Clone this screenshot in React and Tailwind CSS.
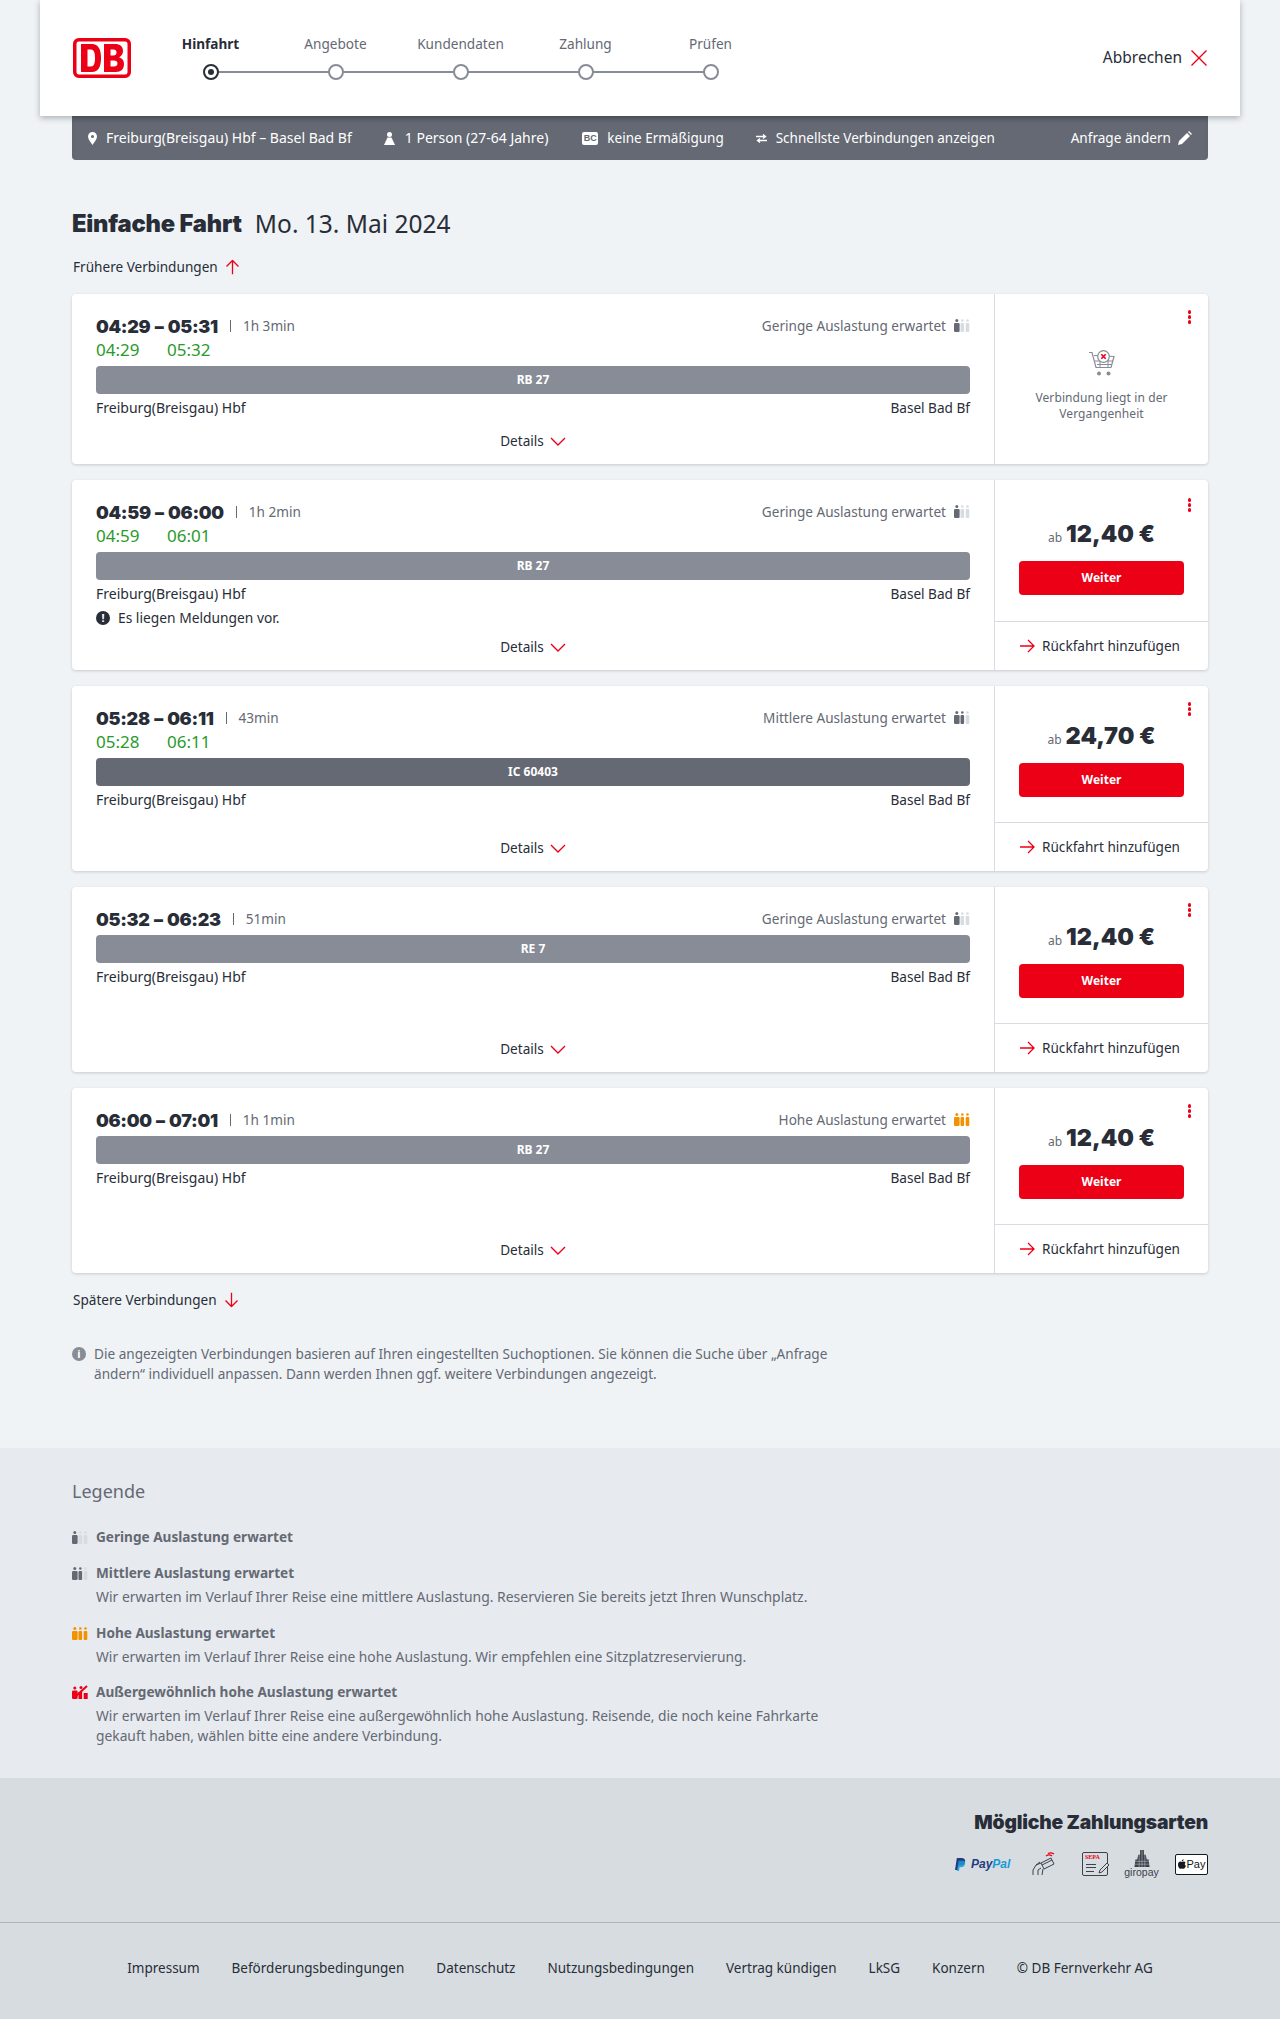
const STEPS = ['Hinfahrt', 'Angebote', 'Kundendaten', 'Zahlung', 'Prüfen'];

const CONNECTIONS = [
  { time: '04:29 – 05:31', dur: '1h 3min', load: 'Geringe Auslastung erwartet', level: 1, live: ['04:29', '05:32'], train: 'RB 27', height: 'h-[170px]', past: true },
  { time: '04:59 – 06:00', dur: '1h 2min', load: 'Geringe Auslastung erwartet', level: 1, live: ['04:59', '06:01'], train: 'RB 27', height: 'h-[190px]', price: '12,40 €', note: true },
  { time: '05:28 – 06:11', dur: '43min', load: 'Mittlere Auslastung erwartet', level: 2, live: ['05:28', '06:11'], train: 'IC 60403', height: 'h-[185px]', price: '24,70 €', dark: true },
  { time: '05:32 – 06:23', dur: '51min', load: 'Geringe Auslastung erwartet', level: 1, train: 'RE 7', height: 'h-[185px]', price: '12,40 €' },
  { time: '06:00 – 07:01', dur: '1h 1min', load: 'Hohe Auslastung erwartet', level: 3, train: 'RB 27', height: 'h-[185px]', price: '12,40 €' },
];

const FOOTER_LINKS = ['Impressum', 'Beförderungsbedingungen', 'Datenschutz', 'Nutzungsbedingungen', 'Vertrag kündigen', 'LkSG', 'Konzern', '© DB Fernverkehr AG'];

const DbLogo = () => (
  <svg viewBox="0 0 58 40" className="w-[58px] h-10 shrink-0">
    <rect x="1.750" y="1.750" width="54.500" height="36.500" rx="4" fill="#fff" stroke="#ec0016" strokeWidth="3.500" />
    <path fillRule="evenodd" fill="#ec0016" d="M8 6h11c6 0 9 5 9 14s-3 14-9 14H8zM14.500 11.500v17h3.500c3 0 4-3.500 4-8.500s-1-8.500-4-8.500zM31 6h11c5 0 8 2.500 8 7 0 3-1.500 5-4 6.300 3 .8 5 3.200 5 6.700 0 5-3 8-8 8H31zM37.500 11.500v6h3c2 0 3-1 3-3s-1-3-3-3zM37.500 22.500v6h3.500c2 0 3.500-1 3.500-3s-1.500-3-3.500-3z" />
  </svg>
);

const RedArrow = ({ className = '' }) => (
  <svg viewBox="0 0 15 14" className={`w-[15px] h-[14px] shrink-0 ${className}`} fill="none" stroke="#ec0016" strokeWidth="1.300">
    <path d="M0 7h14M8 1l6 6-6 6" />
  </svg>
);

const RedChevron = () => (
  <svg viewBox="0 0 16 9" className="w-4 h-[9px] shrink-0" fill="none" stroke="#ec0016" strokeWidth="1.400">
    <path d="M1 1l7 7 7-7" />
  </svg>
);

// three little people, the first "level" of them filled
const Occupancy = ({ level, color = '#646973' }) => {
  const fill = (i) => (i < level ? color : '#d7dce1');
  return (
    <svg viewBox="0 0 16 13" className="w-4 h-[13px] shrink-0">
      <circle cx="2.800" cy="1.500" r="1.500" fill={fill(0)} />
      <rect x="0" y="4" width="5.600" height="9" rx="1.200" fill={fill(0)} />
      <circle cx="8.300" cy="1.500" r="1.300" fill={fill(1)} />
      <rect x="6.500" y="4" width="3.600" height="9" rx="1" fill={fill(1)} />
      <circle cx="13.500" cy="1.500" r="1.300" fill={fill(2)} />
      <rect x="11.700" y="4" width="3.600" height="9" rx="1" fill={fill(2)} />
    </svg>
  );
};

const OccupancyFull = () => (
  <svg viewBox="0 0 16 14" className="w-4 h-[14px] shrink-0">
    <circle cx="2.800" cy="3" r="1.500" fill="#ec0016" />
    <rect x="0" y="5.500" width="5.600" height="8.500" rx="1.200" fill="#ec0016" />
    <rect x="6.500" y="7" width="3.600" height="7" fill="#ec0016" />
    <rect x="11.700" y="8" width="4" height="6" fill="#ec0016" />
    <path d="M4 11 15 1" stroke="#ec0016" strokeWidth="2" />
    <circle cx="9" cy="2.500" r="1.500" fill="#ec0016" />
  </svg>
);

const CartIcon = () => (
  <svg viewBox="0 0 26 26" className="w-[26px] h-[26px]" fill="none" stroke="#878c96">
    <path d="M0 2.500h3l4 15h15M22 17.500l3-11-20-1" strokeWidth="1.200" />
    <path d="M6 11h18M8 14.500h15M11 7v10M19 7v10" strokeWidth="1" />
    <circle cx="14.500" cy="6.500" r="5.800" fill="#fff" strokeWidth="1.200" />
    <path d="M12.300 4.300l4.400 4.400M16.700 4.300l-4.400 4.400" stroke="#ec0016" strokeWidth="1.600" />
    <circle cx="10" cy="23.500" r="2" fill="#878c96" stroke="none" />
    <circle cx="19.500" cy="23.500" r="2" fill="#878c96" stroke="none" />
  </svg>
);

const PayPalLogo = () => (
  <div className="flex items-center gap-[5px] w-[56px] shrink-0">
    <svg viewBox="0 0 12 14" className="w-[11px] h-[13px] shrink-0">
      <path d="M2 0h5c3 0 4.500 1.500 4 4s-2.500 4-5 4H4l-1 5H0z" fill="#253b80" />
      <path d="M4 3h4c2.500 0 3.500 1 3 3.500S8.500 10 6.500 10H5l-.7 4H2z" fill="#179bd7" opacity="0.85" />
    </svg>
    <span className="text-[12px] font-bold italic leading-none whitespace-nowrap [font-family:'Liberation_Sans',sans-serif]">
      <span className="text-[#253b80]">Pay</span><span className="text-[#179bd7]">Pal</span>
    </span>
  </div>
);

const CardTap = () => (
  <svg viewBox="0 0 24 24" className="w-6 h-6 ml-[21px] shrink-0" fill="none" stroke="#3c414b" strokeWidth="1">
    <path d="M9 11l10-5 3 6-10 5z" />
    <path d="M10 13l10-5" />
    <path d="M9 11l-5 2-3 5v5M6 23v-5l3-2M10 23l1-6M4 13l4-3" />
    <path d="M14 4c2-1.500 4-1.500 6 0M16 1.500c2-1 4-.8 6 .5" stroke="#ec0016" strokeWidth="1.300" />
  </svg>
);

const Sepa = () => (
  <div className="relative ml-[26px] w-[26px] h-[24px] shrink-0 rounded-[2px] border border-[#3c414b]">
    <span className="absolute top-[1px] left-[2px] text-[6px] leading-[7px] font-bold text-[#ec0016] [font-family:'Liberation_Serif',serif]">SEPA</span>
    <span className="absolute top-[11px] left-[3px] w-[10px] h-px bg-[#3c414b]" />
    <span className="absolute top-[14px] left-[3px] w-[10px] h-px bg-[#3c414b]" />
    <span className="absolute top-[18px] left-[3px] w-[8px] h-px bg-[#3c414b]" />
    <svg viewBox="0 0 12 12" className="absolute top-[9px] -right-[3px] w-3 h-3" fill="#d7dce1" stroke="#3c414b" strokeWidth="1">
      <path d="M1 11l1-3 7-7 2 2-7 7z" />
    </svg>
  </div>
);

const Giropay = () => (
  <div className="flex flex-col items-center ml-[17px] w-[33px] shrink-0">
    <svg viewBox="0 0 16 18" className="w-4 h-[17px]">
      <path d="M6 0h4v5h2l1 5h2l1 8H0l1-8h2l1-5h2z" fill="#3c414b" />
      <path d="M0 12h16M0 15h16M5 5v13M8 0v18M11 5v13" stroke="#d7dce1" strokeWidth="0.500" />
    </svg>
    <span className="text-[10.500px] leading-[11px] text-[#3c414b] [font-family:'Liberation_Sans',sans-serif]">giropay</span>
  </div>
);

const ApplePay = () => (
  <div className="ml-[17px] w-[33px] h-[21px] shrink-0 rounded-[2px] border border-[#131821] bg-white flex items-center justify-center gap-[1px] text-[#131821]">
    <svg viewBox="0 0 10 12" className="w-[8px] h-[10px]">
      <path fill="#131821" d="M7 3c1 0 2 .5 2.500 1.300C8 5.200 8.200 7.500 10 8.200 9.300 10 8.200 12 7 12c-.8 0-1.200-.5-2-.5s-1.200.5-2 .5C1.500 12 0 9.500 0 7c0-2.500 1.500-4 3-4 .8 0 1.400.5 2 .5S6.200 3 7 3zM7 0c.1 1.300-1 2.700-2.300 2.600C4.500 1.300 5.800.1 7 0z" />
    </svg>
    <span className="text-[11px] leading-none [font-family:'Liberation_Sans',sans-serif]">Pay</span>
  </div>
);

const ConnectionCard = ({ c }) => (
  <div className={`flex ${c.height} bg-white rounded-[4px] shadow-[0_1px_3px_rgba(40,45,55,0.2)]`}>
    <div className="flex-1 min-w-0 flex flex-col pl-6 pr-6 pt-5 border-r border-[#d7dce1]">
      <div className="flex items-center justify-between h-6">
        <div className="flex items-center">
          <span className="text-[18px] font-black text-[#282d37] tracking-[-0.3px] [word-spacing:1px] [font-family:Inter,sans-serif]">{c.time}</span>
          <span className="mx-3 h-3 w-px bg-[#646973]" />
          <span className="text-[#646973]">{c.dur}</span>
        </div>
        <div className="flex items-center gap-2 text-[#646973]">
          {c.load}
          <Occupancy level={c.level} color={c.level === 3 ? '#f39200' : '#646973'} />
        </div>
      </div>
      {c.live && (
        <div className="flex h-6 text-[17px] leading-6 text-[#2a9a2a]">
          <span className="w-[71px]">{c.live[0]}</span>
          <span>{c.live[1]}</span>
        </div>
      )}
      <div className={`mt-1 h-7 rounded-[4px] flex items-center justify-center text-white text-xs font-bold shrink-0 ${c.dark ? 'bg-[#646973]' : 'bg-[#878c96]'}`}>
        {c.train}
      </div>
      <div className="flex justify-between mt-[2px] h-6 items-center">
        <span className="text-sm">Freiburg(Breisgau) Hbf</span>
        <span>Basel Bad Bf</span>
      </div>
      {c.note && (
        <div className="flex items-center gap-2 h-6 leading-6 text-[13.800px]">
          <span className="w-[14px] h-[14px] rounded-full bg-[#282d37] text-white text-[11px] leading-[14px] font-bold text-center">!</span>
          Es liegen Meldungen vor.
        </div>
      )}
      <div className="mt-auto mb-[11px] flex items-center justify-center gap-[6px] h-6">
        Details
        <RedChevron />
      </div>
    </div>
    <div className="relative w-[213px] shrink-0 flex flex-col">
      <div className={`absolute right-[17px] flex flex-col gap-[1.500px] ${c.note ? 'top-[18px]' : 'top-4'}`}>
        <span className="w-[3.500px] h-[3.500px] rounded-full bg-[#ec0016]" />
        <span className="w-[3.500px] h-[3.500px] rounded-full bg-[#ec0016]" />
        <span className="w-[3.500px] h-[3.500px] rounded-full bg-[#ec0016]" />
      </div>
      {c.past ? (
        <div className="flex-1 flex flex-col items-center pt-14 text-xs leading-4 text-[#646973] text-center">
          <CartIcon />
          <p className="mt-[14px] w-[150px] tracking-[0.1px]">Verbindung liegt in der Vergangenheit</p>
        </div>
      ) : (
        <>
          <div className={`flex-1 flex flex-col items-center justify-end border-b border-[#d7dce1] ${c.note ? 'pb-[26px]' : 'pb-[25px]'}`}>
            <div className="flex items-baseline gap-1 text-[#646973] text-xs">
              ab
              <span className="text-[23.500px] leading-8 font-black text-[#282d37] [font-family:Inter,sans-serif]">{c.price}</span>
            </div>
            <div className="mt-[11px] w-[165px] h-[34px] rounded-[4px] bg-[#ec0016] text-white text-xs font-bold flex items-center justify-center">
              Weiter
            </div>
          </div>
          <div className="h-12 flex items-center gap-[7px] pl-[25px]">
            <RedArrow />
            Rückfahrt hinzufügen
          </div>
        </>
      )}
    </div>
  </div>
);

export default function App() {
  return (
    <div className="w-[1280px] min-h-[2019px] bg-[#eff3f6] text-[#282d37] text-[13.600px] [font-family:'Noto_Sans',sans-serif]">
      {/* Header */}
      <header className="relative z-10 mx-10 h-[116px] bg-white shadow-[0_2px_6px_rgba(40,45,55,0.35)] flex items-center pl-[33px] pr-[33px]">
        <DbLogo />
        <div className="ml-[17px] mb-1 flex">
          {STEPS.map((step, i) => (
            <div key={step} className="relative w-[125px] flex flex-col items-center">
              <span className={`h-6 leading-6 ${i === 0 ? 'font-bold text-[#282d37]' : 'text-[#646973]'}`}>{step}</span>
              <div className="relative mt-2 h-4 w-full flex justify-center">
                {i < 4 && <span className="absolute top-[7px] left-1/2 w-full h-[2px] bg-[#878c96]" />}
                <span className={`relative w-4 h-4 rounded-full bg-white border-2 flex items-center justify-center ${i === 0 ? 'border-[#282d37]' : 'border-[#878c96]'}`}>
                  {i === 0 && <span className="w-[6px] h-[6px] rounded-full bg-[#282d37]" />}
                </span>
              </div>
            </div>
          ))}
        </div>
        <div className="ml-auto flex items-center gap-[9px] text-[15.500px] text-[#282d37]">
          Abbrechen
          <svg viewBox="0 0 16 16" className="w-4 h-4 shrink-0" fill="none" stroke="#ec0016" strokeWidth="1.400">
            <path d="M.5.500l15 15M15.500.500l-15 15" />
          </svg>
        </div>
      </header>

      {/* Query summary */}
      <div className="mx-[72px] h-11 bg-[#646973] rounded-b-[4px] text-white flex items-center px-4 shadow-[inset_0_4px_4px_-2px_rgba(40,45,55,0.3)]">
        <svg viewBox="0 0 9 13" className="w-[9px] h-[13px] shrink-0">
          <path fillRule="evenodd" fill="#fff" d="M4.500 0C7 0 9 2 9 4.500 9 7.500 6 10.500 4.500 13 3 10.500 0 7.500 0 4.500 0 2 2 0 4.500 0zm0 3a1.500 1.500 0 100 3 1.500 1.500 0 000-3z" />
        </svg>
        <span className="ml-[9px] text-sm">Freiburg(Breisgau) Hbf – Basel Bad Bf</span>
        <svg viewBox="0 0 11 13" className="ml-8 w-[11px] h-[13px] shrink-0">
          <circle cx="5.500" cy="2.500" r="2.500" fill="#fff" />
          <path d="M3.500 5.500h4L11 13H0z" fill="#fff" />
        </svg>
        <span className="ml-[10px] text-sm">1 Person (27-64 Jahre)</span>
        <span className="ml-[34px] w-4 h-[13px] rounded-[2px] bg-white text-[#646973] text-[9px] leading-[13px] font-bold text-center shrink-0 [font-family:'Liberation_Sans',sans-serif]">BC</span>
        <span className="ml-[9px] text-[13.500px]">keine Ermäßigung</span>
        <svg viewBox="0 0 11 9" className="ml-8 w-[11px] h-[9px] shrink-0" fill="none" stroke="#fff" strokeWidth="1.300">
          <path d="M0 2.500h9M7 .5l2.500 2L7 4.500M11 6.500H2M4 4.500l-2.500 2L4 8.500" />
        </svg>
        <span className="ml-[9px] text-[13.500px]">Schnellste Verbindungen anzeigen</span>
        <span className="ml-auto">Anfrage ändern</span>
        <svg viewBox="0 0 14 14" className="ml-[7px] w-[14px] h-[14px] shrink-0" fill="#fff">
          <path d="M0 14l1-4 8-8 3 3-8 8zM10 1l1-1 3 3-1 1z" />
        </svg>
      </div>

      {/* Result list */}
      <main className="mx-[72px]">
        <h1 className="mt-[46px] h-9 flex items-center text-[24.500px]">
          <span className="font-black [font-family:Inter,sans-serif] text-[23.700px] tracking-[-0.2px]">Einfache Fahrt</span>
          <span className="ml-[13px]">Mo. 13. Mai 2024</span>
        </h1>
        <div className="mt-[13px] pl-px h-6 flex items-center gap-[7px]">
          Frühere Verbindungen
          <RedArrow className="-rotate-90" />
        </div>
        <div className="mt-[15px] flex flex-col gap-4">
          {CONNECTIONS.map((c) => (
            <ConnectionCard key={c.time} c={c} />
          ))}
        </div>
        <div className="mt-[15px] pl-px h-6 flex items-center gap-[7px]">
          Spätere Verbindungen
          <RedArrow className="rotate-90" />
        </div>
        <div className="mt-8 flex gap-2 w-[770px] leading-5 text-[#646973]">
          <span className="mt-[3px] w-[14px] h-[14px] shrink-0 rounded-full bg-[#878c96] text-white text-[11px] leading-[14px] font-bold text-center">i</span>
          <p>Die angezeigten Verbindungen basieren auf Ihren eingestellten Suchoptionen. Sie können die Suche über „Anfrage ändern“ individuell anpassen. Dann werden Ihnen ggf. weitere Verbindungen angezeigt.</p>
        </div>
      </main>

      {/* Legend */}
      <section className="mt-16 h-[330px] bg-[#e7eaef] px-[72px] pt-[31px] text-[#646973]">
        <h2 className="text-[18px] leading-6">Legende</h2>
        <div className="mt-6 flex items-center h-5 font-bold">
          <span className="w-6"><Occupancy level={1} /></span>Geringe Auslastung erwartet
        </div>
        <div className="mt-4 flex items-center h-5 font-bold">
          <span className="w-6"><Occupancy level={2} /></span>Mittlere Auslastung erwartet
        </div>
        <p className="mt-1 ml-6 leading-5 text-[13.950px]">Wir erwarten im Verlauf Ihrer Reise eine mittlere Auslastung. Reservieren Sie bereits jetzt Ihren Wunschplatz.</p>
        <div className="mt-4 flex items-center h-5 font-bold">
          <span className="w-6"><Occupancy level={3} color="#f39200" /></span>Hohe Auslastung erwartet
        </div>
        <p className="mt-1 ml-6 leading-5 text-[13.800px]">Wir erwarten im Verlauf Ihrer Reise eine hohe Auslastung. Wir empfehlen eine Sitzplatzreservierung.</p>
        <div className="mt-[15px] flex items-center h-5 font-bold">
          <span className="w-6"><OccupancyFull /></span>Außergewöhnlich hohe Auslastung erwartet
        </div>
        <p className="mt-1 ml-6 w-[760px] leading-5 text-[13.800px]">Wir erwarten im Verlauf Ihrer Reise eine außergewöhnlich hohe Auslastung. Reisende, die noch keine Fahrkarte gekauft haben, wählen bitte eine andere Verbindung.</p>
      </section>

      {/* Payment + footer */}
      <section className="h-[145px] bg-[#d7dce1] border-b border-[#afb4bb] px-[72px] pt-[30px] flex flex-col items-end">
        <h2 className="text-[19.300px] leading-7 font-black [font-family:Inter,sans-serif] tracking-[-0.2px]">Mögliche Zahlungsarten</h2>
        <div className="mt-[14px] flex items-center">
          <PayPalLogo />
          <CardTap />
          <Sepa />
          <Giropay />
          <ApplePay />
        </div>
      </section>
      <footer className="h-[96px] pb-[6px] bg-[#d7dce1] flex items-center justify-center gap-8 text-[13.500px]">
        {FOOTER_LINKS.map((link) => (
          <span key={link}>{link}</span>
        ))}
      </footer>
    </div>
  );
}
